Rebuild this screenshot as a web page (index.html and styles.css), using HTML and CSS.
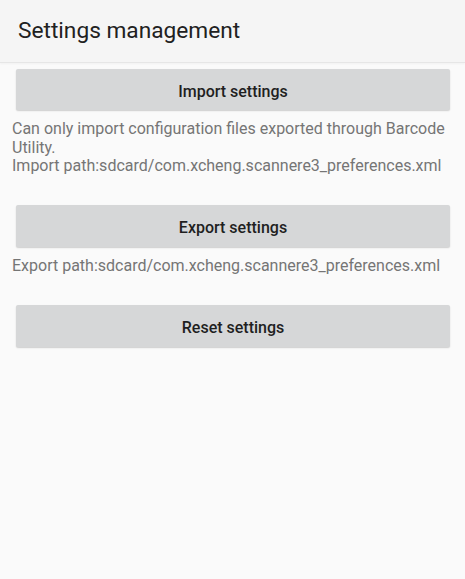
FILE: index.html
```html
<!DOCTYPE html>
<html>
<head>
<meta charset="utf-8">
<link rel="stylesheet" href="styles.css">
</head>
<body>
<header class="appbar"><h1 class="title">Settings management</h1></header>
<main class="content">
  <button class="btn btn-import">Import settings</button>
  <p class="note note-import">Can only import configuration files exported through Barcode Utility.<br>Import path:sdcard/com.xcheng.scannere3_preferences.xml</p>
  <button class="btn btn-export">Export settings</button>
  <p class="note note-export">Export path:sdcard/com.xcheng.scannere3_preferences.xml</p>
  <button class="btn btn-reset">Reset settings</button>
</main>
</body>
</html>
```
FILE: styles.css
```css
* { box-sizing: border-box; }
html, body { margin: 0; padding: 0; }
body {
  width: 465px;
  height: 579px;
  background: #fafafa;
  font-family: Roboto, "Noto Sans", sans-serif;
  overflow: hidden;
}
.appbar {
  height: 63px;
  background: #f5f5f5;
  border-bottom: 1px solid #e6e6e6;
  box-shadow: 0 1px 2px rgba(0,0,0,0.04);
  display: flex;
  align-items: center;
  padding-left: 18px;
}
.title {
  margin: 0;
  font-size: 22.7px;
  font-weight: 400;
  color: #212121;
  padding-bottom: 1px;
}
.content {
  display: flex;
  flex-direction: column;
  padding: 6px 15px 0 16px;
}
.btn {
  height: 41px;
  border: none;
  border-radius: 2px;
  background: #d6d7d8;
  box-shadow: 0 1px 1.5px rgba(0,0,0,0.18);
  font-family: Roboto, sans-serif;
  font-size: 16px;
  font-weight: 500;
  color: #1f1f1f;
  padding: 3px 0 0;
}
.btn-export { margin-top: 29px; height: 42px; }
.btn-reset { margin-top: 30px; height: 42px; }
.note {
  margin: 0 0 0 -4px;
  font-size: 16px;
  line-height: 18.7px;
  color: #757575;
}
.note-import { margin-top: 10px; }
.note-export { margin-top: 9.5px; }
```
